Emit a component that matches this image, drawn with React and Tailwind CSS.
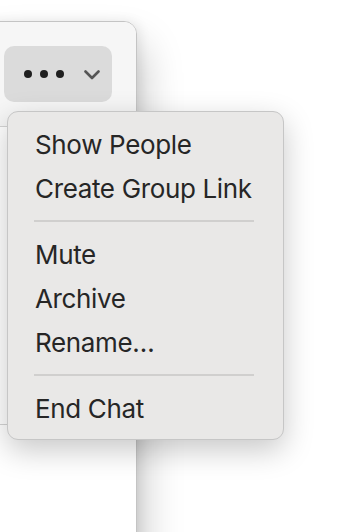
import React from "react";

const groups = [
  ["Show People", "Create Group Link"],
  ["Mute", "Archive", "Rename…"],
  ["End Chat"],
];

function MoreButton() {
  return (
    <div className="ml-[18px] mt-[24px] flex h-[56px] w-[108px] items-center rounded-[10px] bg-[#dbdbdb] pl-[20px]">
      <div className="flex gap-[8px]">
        <span className="h-[8px] w-[8px] rounded-full bg-[#1f1f1f]" />
        <span className="h-[8px] w-[8px] rounded-full bg-[#1f1f1f]" />
        <span className="h-[8px] w-[8px] rounded-full bg-[#1f1f1f]" />
      </div>
      <svg className="ml-[20px] mt-[2px]" width="16" height="10" viewBox="0 0 16 10" fill="none">
        <path d="M1.5 1.5 L8 8 L14.5 1.5" stroke="#555" strokeWidth="2.6" strokeLinecap="round" strokeLinejoin="round" />
      </svg>
    </div>
  );
}

export default function App() {
  return (
    <div
      className="relative h-[532px] w-[350px] overflow-hidden bg-white"
      style={{ fontFamily: "Inter, 'Liberation Sans', sans-serif" }}
    >
      <div className="pt-[21px]">
        {/* window */}
        <div className="-ml-[15px] flex h-[560px] w-[152px] flex-col rounded-tr-[13px] border border-[#c4c4c4] bg-white shadow-[6px_24px_40px_rgba(0,0,0,0.22),3px_0_12px_rgba(0,0,0,0.08)]">
          <div className="h-[105px] rounded-tr-[12px] border-b border-[#d4d4d4] bg-[#f6f6f6]">
            <MoreButton />
          </div>
          <div className="h-[298px] border-b border-[#d4d4d4]" />
          <div className="flex-1" />
        </div>
      </div>

      {/* context menu */}
      <div className="absolute left-[7px] top-[111px] w-[277px] rounded-[11px] border border-[#c6c6c6] bg-[#e9e8e7] pb-[8px] pt-[11px] shadow-[0_10px_30px_rgba(0,0,0,0.22)]">
        {groups.map((g, i) => (
          <div key={i}>
            {i > 0 && <div className="mb-[11px] ml-[26px] mt-[9px] h-[2px] w-[220px] bg-[#d0cfce]" />}
            {g.map((label) => (
              <div key={label} className="h-[44px] pl-[27px] text-[26px] leading-[44px] tracking-[-0.35px] text-[#262626]">
                {label}
              </div>
            ))}
          </div>
        ))}
      </div>
    </div>
  );
}
